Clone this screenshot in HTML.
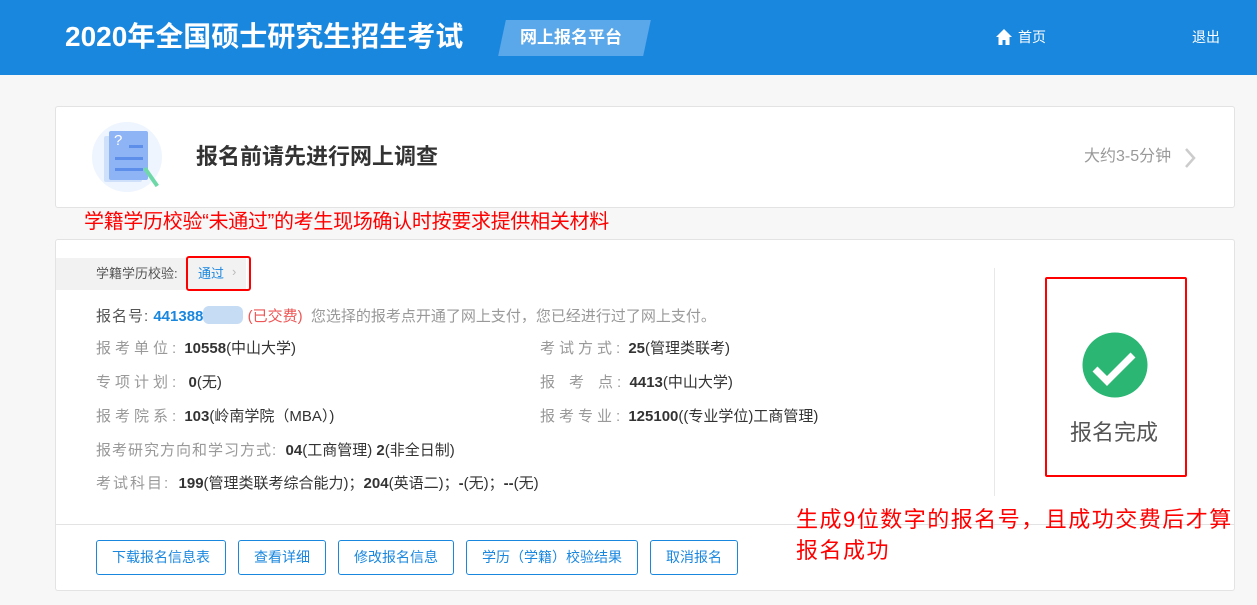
<!DOCTYPE html>
<html><head><meta charset="utf-8"><style>
*{margin:0;padding:0;box-sizing:border-box}
body{width:1257px;height:605px;background:#f7f7f7;font-family:"Liberation Sans","Noto Sans CJK SC",sans-serif;position:relative;overflow:hidden;color:#333}
.hd{position:absolute;left:0;top:0;width:1257px;height:75px;background:#1a87df}
.abs{position:absolute;white-space:nowrap}
.card{position:absolute;background:#fff;border:1px solid #e3e3e3;border-radius:3px}
.lbl{color:#999;font-size:15px}
.sp{letter-spacing:4px}
.val{color:#333;font-size:15px;letter-spacing:0}
.val b{font-weight:bold}
.btn{position:absolute;top:540px;height:35px;border:1px solid #1a87df;border-radius:3px;color:#1a87df;font-size:14px;line-height:33px;text-align:center;background:#fff}
</style></head><body>
<div class="hd"></div>
<div class="abs" style="left:65px;top:18px;font-size:28px;font-weight:bold;color:#fff;line-height:38px">2020年全国硕士研究生招生考试</div>
<div class="abs" style="left:502px;top:20px;width:145px;height:36px;background:#5aa7ea;transform:skewX(-12deg)"></div>
<div class="abs" style="left:520px;top:20px;font-size:17px;font-weight:bold;color:#fff;line-height:36px">网上报名平台</div>
<svg class="abs" style="left:995px;top:28px" width="18" height="18" viewBox="0 0 18 18"><path d="M9 1L1 9h2.5v8h4v-5h3v5h4V9H17z" fill="#fff"/></svg>
<div class="abs" style="left:1018px;top:27px;font-size:14px;color:#fff;line-height:20px">首页</div>
<div class="abs" style="left:1192px;top:27px;font-size:14px;color:#fff;line-height:20px">退出</div>

<div class="card" style="left:55px;top:106px;width:1180px;height:102px"></div>
<div class="abs" style="left:92px;top:122px;width:70px;height:70px;border-radius:50%;background:#eef5fe"></div>
<div class="abs" style="left:104px;top:136px;width:38px;height:46px;background:#cfe0fb;border-radius:2px"></div>
<div class="abs" style="left:109px;top:131px;width:39px;height:49px;background:#8fb4f6;border-radius:2px"></div>
<div class="abs" style="left:114px;top:132px;font-size:15px;color:#fff">?</div>
<div class="abs" style="left:129px;top:145px;width:14px;height:3px;background:#5d8eea"></div>
<div class="abs" style="left:115px;top:157px;width:28px;height:3px;background:#5d8eea"></div>
<div class="abs" style="left:115px;top:168px;width:28px;height:3px;background:#5d8eea"></div>
<div class="abs" style="left:140px;top:175px;width:22px;height:4px;background:#6fd8a8;transform:rotate(55deg)"></div>
<div class="abs" style="left:196px;top:142px;font-size:22px;font-weight:bold;color:#333;line-height:30px">报名前请先进行网上调查</div>
<div class="abs" style="left:1084px;top:147px;font-size:16px;color:#999;line-height:20px">大约3-5分钟</div>
<svg class="abs" style="left:1183px;top:147px" width="14" height="22"><path d="M3 2l8 9-8 9" stroke="#ccc" stroke-width="2.5" fill="none"/></svg>

<div class="abs" style="left:84px;top:210px;font-size:20px;color:#f00;line-height:24px;letter-spacing:-0.3px">学籍学历校验“未通过”的考生现场确认时按要求提供相关材料</div>

<div class="card" style="left:55px;top:239px;width:1180px;height:352px"></div>
<div class="abs" style="left:56px;top:258px;width:190px;height:32px;background:#f2f2f2"></div>
<div class="abs" style="left:96px;top:265px;font-size:13px;color:#555;line-height:18px">学籍学历校验:</div>
<div class="abs" style="left:198px;top:265px;font-size:13px;color:#1a87df;line-height:18px">通过</div>
<div class="abs" style="left:232px;top:264px;font-size:13px;color:#bbb">›</div>
<div class="abs" style="left:186px;top:256px;width:65px;height:35px;border:2px solid #f00;border-radius:3px"></div>

<div class="abs" style="left:96px;top:306px;font-size:15px;line-height:20px;color:#555"><span style="letter-spacing:1px">报名号:</span> <b style="color:#1a87df">441388</b><span style="display:inline-block;width:40px;height:18px;background:#c6dcf5;vertical-align:-3px;border-radius:6px"></span> <span style="color:#e55">(已交费)</span> &nbsp;<span style="color:#999">您选择的报考点开通了网上支付，您已经进行过了网上支付。</span></div>

<div class="abs lbl" style="left:96px;top:339px;line-height:20px"><span class="sp">报考单位:</span> <span class="val"><b>10558</b>(中山大学)</span></div>
<div class="abs lbl" style="left:96px;top:373px;line-height:20px"><span class="sp">专项计划:</span>&nbsp; <span class="val"><b>0</b>(无)</span></div>
<div class="abs lbl" style="left:96px;top:407px;line-height:20px"><span class="sp">报考院系:</span> <span class="val"><b>103</b>(岭南学院（MBA）)</span></div>
<div class="abs lbl" style="left:96px;top:441px;line-height:20px"><span style="letter-spacing:1px">报考研究方向和学习方式:</span>&nbsp; <span class="val"><b>04</b>(工商管理) <b>2</b>(非全日制)</span></div>
<div class="abs lbl" style="left:96px;top:474px;line-height:20px"><span style="letter-spacing:2px">考试科目:</span>&nbsp; <span class="val"><b>199</b>(管理类联考综合能力)；<b>204</b>(英语二)；<b>-</b>(无)；<b>--</b>(无)</span></div>
<div class="abs lbl" style="left:540px;top:339px;line-height:20px"><span class="sp">考试方式:</span> <span class="val"><b>25</b>(管理类联考)</span></div>
<div class="abs lbl" style="left:540px;top:373px;line-height:20px"><span style="letter-spacing:14px">报考点</span><span style="margin-left:-10px">:</span>&nbsp; <span class="val"><b>4413</b>(中山大学)</span></div>
<div class="abs lbl" style="left:540px;top:407px;line-height:20px"><span class="sp">报考专业:</span> <span class="val"><b>125100</b>((专业学位)工商管理)</span></div>

<div class="abs" style="left:994px;top:268px;width:1px;height:228px;background:#e8e8e8"></div>
<div class="abs" style="left:56px;top:524px;width:1178px;height:1px;background:#e3e3e3"></div>

<div class="abs" style="left:1045px;top:277px;width:142px;height:200px;border:2px solid #f00;border-radius:2px"></div>
<svg class="abs" style="left:1082px;top:332px" width="66" height="66"><circle cx="33" cy="33" r="32.5" fill="#2bb673"/><path d="M13 37l12 12 26-26" stroke="#fff" stroke-width="7" fill="none"/></svg>
<div class="abs" style="left:1070px;top:418px;font-size:22px;color:#555;line-height:30px">报名完成</div>

<div class="btn" style="left:96px;width:130px">下载报名信息表</div>
<div class="btn" style="left:238px;width:88px">查看详细</div>
<div class="btn" style="left:338px;width:116px">修改报名信息</div>
<div class="btn" style="left:466px;width:172px">学历（学籍）校验结果</div>
<div class="btn" style="left:650px;width:88px">取消报名</div>

<div class="abs" style="left:796px;top:504px;font-size:22px;letter-spacing:1.5px;color:#f00;line-height:31px">生成9位数字的报名号，且成功交费后才算<br>报名成功</div>
</body></html>
